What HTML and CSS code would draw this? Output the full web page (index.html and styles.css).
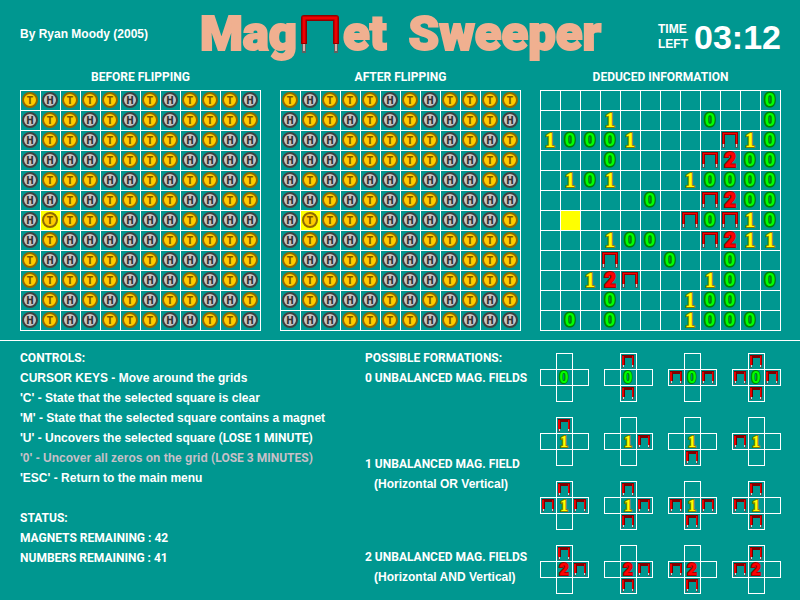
FILE: index.html
```html
<!DOCTYPE html>
<html lang="en">
<head>
<meta charset="utf-8">
<title>Magnet Sweeper</title>
<link rel="stylesheet" href="styles.css">
</head>
<body>
<svg class="defs" aria-hidden="true">
  <symbol id="magnet" viewBox="0 0 16 16">
    <path d="M0 0H16V13H13V3H3V13H0Z" fill="#900000"/>
    <path d="M1 1H15V13H14V2H2V13H1Z" fill="#f80000"/>
    <path d="M0 12H3V16H0ZM13 12H16V16H13Z" fill="#505858"/>
    <path d="M1 12H2V15H1ZM14 12H15V15H14Z" fill="#e0d0d0"/>
  </symbol>
  <symbol id="magnet-small" viewBox="0 0 12 13">
    <path d="M0 0H12V3H0Z" fill="#800000"/>
    <path d="M0 1H2V10H0ZM10 1H12V10H10Z" fill="#e80000"/>
    <path d="M11 1H12V10H11Z" fill="#a00000"/>
    <path d="M2 3H3V10H2Z" fill="#700000"/>
    <path d="M0 10H2V13H0ZM10 10H12V13H10Z" fill="#505858"/>
    <path d="M1 10H2V12H1ZM10 10H11V12H10Z" fill="#e0d0d0"/>
  </symbol>
</svg>

<header class="header">
  <p class="byline">By Ryan Moody (2005)</p>
  <h1 class="title">
    <span>Mag<svg class="title-magnet" width="38" height="38" viewBox="0 0 38 38" role="img" aria-label="n">
      <path d="M1 28H5V38H1ZM33 28H37V38H33Z" fill="#606060"/>
      <path d="M2 28H4V36H2ZM34 28H36V36H34Z" fill="#d8b0a8"/>
      <path d="M0 29V3Q0 0 3 0H35Q38 0 38 3V29H32V6H6V29Z" fill="#900000"/>
      <path d="M3 28V3H35V28" fill="none" stroke="#f00000" stroke-width="3"/>
    </svg>et</span>
    <span>Sweeper</span>
  </h1>
  <div class="timer">
    <span class="timer-label">TIME LEFT</span>
    <span class="timer-value">03:12</span>
  </div>
</header>

<main>
  <div class="boards">
    <section class="board-panel">
      <h2 class="caps">BEFORE FLIPPING</h2>
      <table class="board" id="before"></table>
    </section>
    <section class="board-panel">
      <h2 class="caps">AFTER FLIPPING</h2>
      <table class="board" id="after"></table>
    </section>
    <section class="board-panel">
      <h2 class="caps">DEDUCED INFORMATION</h2>
      <table class="board" id="deduced"></table>
    </section>
  </div>

  <div class="info">
    <div class="help">
      <h2 class="caps">CONTROLS:</h2>
      <ul>
        <li>CURSOR KEYS - Move around the grids</li>
        <li>'C' - State that the selected square is clear</li>
        <li>'M' - State that the selected square contains a magnet</li>
        <li>'U' - Uncovers the selected square <span class="caps">(LOSE 1 MINUTE)</span></li>
        <li class="unavailable">'0' - Uncover all zeros on the grid <span class="caps">(LOSE 3 MINUTES)</span></li>
        <li>'ESC' - Return to the main menu</li>
      </ul>
      <h2 class="caps status">STATUS:</h2>
      <p class="caps">MAGNETS REMAINING : 42</p>
      <p class="caps">NUMBERS REMAINING : 41</p>
    </div>

    <div class="formations">
      <section class="group first">
        <div class="group-label">
          <h2 class="caps">POSSIBLE FORMATIONS:</h2>
          <p class="caps">0 UNBALANCED MAG. FIELDS</p>
        </div>
        <div class="crosses" data-digit="0" data-sets="-,tb,lr,tlrb"></div>
      </section>
      <section class="group middle">
        <div class="group-label">
          <p class="caps">1 UNBALANCED MAG. FIELD</p>
          <p class="note">(Horizontal OR Vertical)</p>
        </div>
        <div class="crosses" data-digit="1" data-sets="t,r,b,l,tlr,trb,lrb,tlb"></div>
      </section>
      <section class="group last">
        <div class="group-label">
          <p class="caps">2 UNBALANCED MAG. FIELDS</p>
          <p class="note">(Horizontal AND Vertical)</p>
        </div>
        <div class="crosses" data-digit="2" data-sets="tr,rb,lb,tl"></div>
      </section>
    </div>
  </div>
</main>
<script src="script.js"></script>
</body>
</html>
```
FILE: styles.css
```css
* {
  box-sizing: border-box;
}

body {
  margin: 0;
  background: #009790;
  color: #fff;
  font: bold 12px/20px "Liberation Sans", Arial, sans-serif;
}

h1, h2, p, ul {
  margin: 0;
  padding: 0;
  font-size: inherit;
  list-style: none;
}

.defs {
  position: absolute;
  width: 0;
  height: 0;
}

.caps {
  font-family: Roboto, "Liberation Sans", sans-serif;
}

.header {
  display: grid;
  grid-template-columns: 1fr auto 1fr;
  align-items: center;
  height: 67px;
  padding: 0 19px 0 20px;
}

.title {
  display: flex;
  gap: 22px;
  color: #f0b090;
  font: 900 49px/60px Roboto, "Liberation Sans", sans-serif;
  -webkit-text-stroke: 2px #f0b090;
  white-space: nowrap;
}

.title-magnet {
  margin: 0 4px;
  vertical-align: -3px;
}

.timer {
  display: flex;
  justify-content: flex-end;
  align-items: center;
  gap: 8px;
  padding-top: 6px;
}

.timer-label {
  width: 28px;
  font-size: 12px;
  line-height: 15px;
}

.timer-value {
  font-size: 34px;
  line-height: 36px;
}

.boards {
  display: flex;
  justify-content: space-between;
  padding: 0 19px 9px 20px;
  border-bottom: 1px solid #fff;
}

.board-panel h2 {
  padding-bottom: 3px;
  text-align: center;
}

.board {
  border: solid #fff;
  border-width: 0 1px 1px 0;
  border-spacing: 0;
}

.board td {
  width: 20px;
  height: 20px;
  padding: 0;
  border: solid #fff;
  border-width: 1px 0 0 1px;
}

.board svg,
.crosses svg {
  display: block;
  overflow: visible;
}

.board .selected {
  background: #ff0;
}

.coin {
  stroke-width: 2px;
}

.coin-t { fill: #fc0; stroke: #906800; }
.coin-h { fill: #c4c4c4; stroke: #404040; }

.letter {
  font: 900 10px Roboto, "Liberation Sans", sans-serif;
  text-anchor: middle;
}

.letter-t { fill: #805800; }
.letter-h { fill: #303030; }

.digit {
  font: bold 20px "Liberation Sans", Arial, sans-serif;
  text-anchor: middle;
  paint-order: stroke;
  stroke-width: 2px;
}

.digit-0 { fill: #0f0; stroke: #008000; stroke-width: 3px; font-size: 19px; }
.digit-1 { fill: #ff0; stroke: #887800; font-family: "Liberation Serif", serif; }
.digit-2 { fill: #f00; stroke: #a00000; font-weight: 900; font-family: Roboto, sans-serif; }
.crosses .digit { font-size: 16px; }
.crosses .digit-0 { stroke-width: 2px; }

.cross-box {
  fill: none;
  stroke: #fff;
}

.info {
  display: flex;
  justify-content: space-between;
  padding: 7px 19px 0 20px;
}

.unavailable {
  color: #c8c0c8;
}

.status {
  padding-top: 20px;
}

.formations {
  display: flex;
  flex-direction: column;
  gap: 15px;
}

.group {
  display: flex;
}

.first .crosses {
  padding-top: 5px;
}

.middle {
  align-items: center;
}

.last .group-label {
  padding-top: 2px;
}

.group-label {
  width: 175px;
}

.note {
  padding-left: 9px;
}

.crosses {
  display: grid;
  grid-template-columns: repeat(4, 49px);
  gap: 15px;
}
```
FILE: script.js
```js
const boards = {
  before: [
    "THTTTHTHTTTH", "HTTHTHTHTTTT", "HTTHTTTTHTHH", "HHHHTTTTHHHH",
    "HTTTHHTHTTHT", "HHTHTTTTHHTT", "HTTTTHHHTHHH", "HTHHHHHTTTTT",
    "THHTTHTHHHTT", "TTTTTHHHTHTH", "HTHTHTHTTHHT", "HTHHTTTHHTTH"
  ],
  after: [
    "THTTTHTHTTTT", "HTTHTHTHHTTH", "HHHTTTTTHTHT", "HHHTTTTTHHTT",
    "HTHTHHTHHHTH", "HHTHTHTTHHHH", "HTTTTHHHHHHT", "HTHHTTHTTTTT",
    "THHTTHHHHTTT", "TTTTTHHHTTTT", "HTHHHTHTHTHT", "HHHTTTTHTHHH"
  ],
  deduced: [
    "...........0", "...1....0..0", "10001....m10", "...0....m200",
    ".101...10000", ".....0..m200", ".......m0m10", "...100..m211",
    "...m..0..0..", "..12m...10.0", "...0...100..", ".0.0...1000."
  ]
};
const selected = { row: 6, column: 1 };

function tile(mark) {
  if (mark === ".") return "";
  let content;
  if (mark === "T" || mark === "H") {
    const kind = mark.toLowerCase();
    content = `<circle class="coin coin-${kind}" cx="9" cy="9" r="7"/>` +
      `<text class="letter letter-${kind}" x="9" y="13">${mark}</text>`;
  } else if (mark === "m") {
    content = '<use href="#magnet" x="1" y="1" width="16" height="16"/>';
  } else {
    const baseline = mark === "0" ? 15 : 16;
    content = `<text class="digit digit-${mark}" x="9" y="${baseline}">${mark}</text>`;
  }
  return `<svg width="19" height="19">${content}</svg>`;
}

for (const [id, rows] of Object.entries(boards)) {
  document.getElementById(id).innerHTML = rows.map((row, r) =>
    "<tr>" + [...row].map((mark, c) => {
      const active = r === selected.row && c === selected.column;
      return `<td${active ? ' class="selected"' : ""}>${tile(mark)}</td>`;
    }).join("") + "</tr>").join("");
}

// Arms of a cross: top, left, right, bottom.
const arms = { t: [18, 2], l: [2, 18], r: [34, 18], b: [18, 34] };

for (const box of document.querySelectorAll(".crosses")) {
  const digit = box.dataset.digit;
  box.innerHTML = box.dataset.sets.split(",").map(set => {
    const magnets = [...set].filter(arm => arms[arm]).map(arm =>
      `<use href="#magnet-small" x="${arms[arm][0]}" y="${arms[arm][1]}" width="12" height="13"/>`).join("");
    return '<svg width="49" height="49">' +
      '<rect class="cross-box" x="16.5" y="0.5" width="16" height="48"/>' +
      '<rect class="cross-box" x="0.5" y="16.5" width="48" height="16"/>' +
      magnets +
      `<text class="digit digit-${digit}" x="24" y="30">${digit}</text></svg>`;
  }).join("");
}
```
